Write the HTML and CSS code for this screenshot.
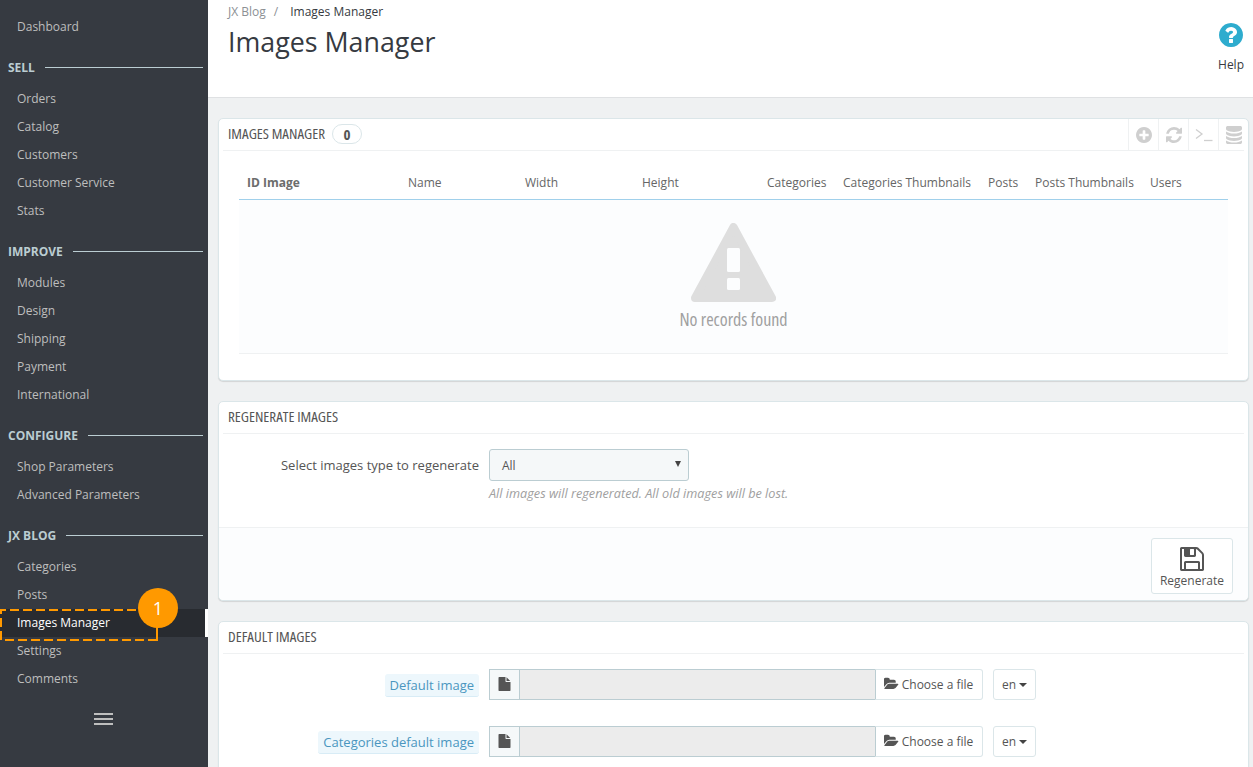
FILE: index.html
```html
<!DOCTYPE html>
<html lang="en">
<head>
<meta charset="utf-8">
<title>Images Manager</title>
<link rel="stylesheet" href="styles.css">
</head>
<body>
<div class="app">
  <nav class="sidebar">
    <a class="item first">Dashboard</a>
    <div class="section"><span>SELL</span></div>
    <a class="item">Orders</a>
    <a class="item">Catalog</a>
    <a class="item">Customers</a>
    <a class="item">Customer Service</a>
    <a class="item">Stats</a>
    <div class="section"><span>IMPROVE</span></div>
    <a class="item">Modules</a>
    <a class="item">Design</a>
    <a class="item">Shipping</a>
    <a class="item">Payment</a>
    <a class="item">International</a>
    <div class="section"><span>CONFIGURE</span></div>
    <a class="item">Shop Parameters</a>
    <a class="item">Advanced Parameters</a>
    <div class="section"><span>JX BLOG</span></div>
    <a class="item">Categories</a>
    <a class="item">Posts</a>
    <a class="item active">Images Manager
      <svg class="callout-box" viewBox="0 0 160 34"><path d="M157 31 H1 V1 H157"/></svg>
      <span class="callout-stem"></span>
      <span class="callout-num">1</span>
    </a>
    <a class="item">Settings</a>
    <a class="item">Comments</a>
    <div class="burger"><i></i><i></i><i></i></div>
  </nav>
  <main class="main">
    <header class="page-head">
      <div>
        <div class="crumbs"><span class="crumb-link">JX Blog</span><span class="crumb-sep">/</span><span>Images Manager</span></div>
        <h1>Images Manager</h1>
      </div>
      <div class="help">
        <svg class="help-icon" viewBox="128 128 1536 1536"><path d="M1024 1376v-192q0-14-9-23t-23-9h-192q-14 0-23 9t-9 23v192q0 14 9 23t23 9h192q14 0 23-9t9-23zm256-672q0-88-55.5-163t-138.5-116-170-41q-243 0-371 213-15 24 8 42l132 100q7 6 19 6 16 0 25-12 53-68 86-92 34-24 86-24 48 0 85.5 26t37.5 59q0 38-20 61t-68 45q-63 28-115.5 86.5t-52.5 125.5v36q0 14 9 23t23 9h192q14 0 23-9t9-23q0-19 21.5-49.5t54.5-49.5q32-18 49-28.5t46-35 44.5-48 28-60.5 12.5-81zm384 192q0 209-103 385.5t-279.5 279.5-385.5 103-385.5-103-279.5-279.5-103-385.5 103-385.5 279.5-279.5 385.5-103 385.5 103 279.5 279.5 103 385.5z"/></svg>
        <span>Help</span>
      </div>
    </header>
    <div class="content">
      <section class="panel">
        <div class="panel-head">
          <span class="panel-title">IMAGES MANAGER</span>
          <span class="count">0</span>
          <div class="tools">
            <div class="tool"><svg viewBox="128 128 1536 1536" class="t-icon"><path d="M1344 960v-128q0-26-19-45t-45-19h-256v-256q0-26-19-45t-45-19h-128q-26 0-45 19t-19 45v256h-256q-26 0-45 19t-19 45v128q0 26 19 45t45 19h256v256q0 26 19 45t45 19h128q26 0 45-19t19-45v-256h256q26 0 45-19t19-45zm320-64q0 209-103 385.5t-279.5 279.5-385.5 103-385.5-103-279.5-279.5-103-385.5 103-385.5 279.5-279.5 385.5-103 385.5 103 279.5 279.5 103 385.5z"/></svg></div>
            <div class="tool"><svg viewBox="128 128 1536 1536" class="t-icon"><path d="M1639 1056q0 5-1 7-64 268-268 434.5t-478 166.5q-146 0-282.5-55t-243.5-157l-129 129q-19 19-45 19t-45-19-19-45v-448q0-26 19-45t45-19h448q26 0 45 19t19 45-19 45l-137 137q71 66 161 102t187 36q134 0 250-65t186-179q11-17 53-117 8-23 30-23h192q13 0 22.5 9.5t9.5 22.5zm25-800v448q0 26-19 45t-45 19h-448q-26 0-45-19t-19-45 19-45l138-138q-148-137-349-137-134 0-250 65t-186 179q-11 17-53 117-8 23-30 23h-199q-13 0-22.5-9.5t-9.5-22.5v-7q65-268 270-434.5t480-166.5q146 0 284 55.5t245 156.5l130-129q19-19 45-19t45 19 19 45z"/></svg></div>
            <div class="tool"><svg viewBox="0 0 18 14" class="t-term"><path d="M1 1.5 L7 6 L1 10.5" /><path d="M9 12.5 H17.5" /></svg></div>
            <div class="tool"><svg viewBox="128 128 1536 1536" preserveAspectRatio="none" class="t-db"><path d="M896 768q237 0 443-43t325-127v170q0 69-103 128t-280 93.5-385 34.5-385-34.5-280-93.5-103-128v-170q119 84 325 127t443 43zm0 768q237 0 443-43t325-127v170q0 69-103 128t-280 93.5-385 34.5-385-34.5-280-93.5-103-128v-170q119 84 325 127t443 43zm0-384q237 0 443-43t325-127v170q0 69-103 128t-280 93.5-385 34.5-385-34.5-280-93.5-103-128v-170q119 84 325 127t443 43zm0-1152q208 0 385 34.5t280 93.5 103 128v128q0 69-103 128t-280 93.5-385 34.5-385-34.5-280-93.5-103-128v-128q0-69 103-128t280-93.5 385-34.5z"/></svg></div>
          </div>
        </div>
        <div class="table-wrap">
          <div class="thead">
            <span class="th-strong">ID Image</span><span>Name</span><span>Width</span><span>Height</span><span>Categories</span><span>Categories Thumbnails</span><span>Posts</span><span>Posts Thumbnails</span><span>Users</span>
          </div>
          <div class="empty">
            <svg class="warn" viewBox="0 0 85 79">
              <path class="warn-tri" d="M42.5 4 L81 75 H4 Z"/>
              <rect class="warn-hole" x="36" y="25" width="13" height="24" rx="1.5"/>
              <rect class="warn-hole" x="36" y="55" width="13" height="12" rx="1.5"/>
            </svg>
            <div class="empty-text">No records found</div>
          </div>
        </div>
      </section>
      <section class="panel">
        <div class="panel-head"><span class="panel-title">REGENERATE IMAGES</span></div>
        <div class="regen-body">
          <div class="row">
            <label class="label">Select images type to regenerate</label>
            <div class="field">
              <div class="select">All<span class="caret-sel"></span></div>
              <p class="hint">All images will regenerated. All old images will be lost.</p>
            </div>
          </div>
        </div>
        <div class="panel-foot">
          <button class="save" type="button">
            <svg viewBox="128 128 1536 1536" class="save-icon"><path d="M512 1536h768v-384h-768v384zm896 0h128v-896q0-14-10-38.5t-20-34.5l-281-281q-10-10-34-20t-39-10v416q0 40-28 68t-68 28h-576q-40 0-68-28t-28-68v-416h-128v1280h128v-416q0-40 28-68t68-28h832q40 0 68 28t28 68v416zm-384-928v-320q0-13-9.5-22.5t-22.5-9.5h-192q-13 0-22.5 9.5t-9.5 22.5v320q0 13 9.5 22.5t22.5 9.5h192q13 0 22.5-9.5t9.5-22.5zm640 32v928q0 40-28 68t-68 28h-1344q-40 0-68-28t-28-68v-1344q0-40 28-68t68-28h928q40 0 88 20t76 48l280 280q28 28 48 76t20 88z"/></svg>
            <span>Regenerate</span>
          </button>
        </div>
      </section>
      <section class="panel">
        <div class="panel-head"><span class="panel-title">DEFAULT IMAGES</span></div>
        <div class="uploads">
          <div class="row up-row">
            <label class="label"><span class="tip">Default image</span></label>
            <div class="file-group">
              <span class="addon"><svg viewBox="128 0 1536 1792" class="file-icon"><path d="M1596 476q14 14 28 36H1152V40q22 14 36 28zM1120 640h544v1056q0 40-28 68t-68 28H224q-40 0-68-28t-28-68V96q0-40 28-68t68-28h800v544q0 40 28 68t68 28z"/></svg></span>
              <span class="file-input"></span>
              <span class="file-btn"><svg viewBox="0 0 1920 1792" class="folder-icon"><path d="M1845 931q0 35-35 73l-336 396q-43 51-120.5 86.5t-143.5 35.5h-1088q-34 0-60.5-13t-26.5-43q0-35 35-73l336-396q43-51 120.5-86.5t143.5-35.5h1088q34 0 60.5 13t26.5 43zm-343-344v160h-832q-94 0-197 47.5t-164 119.5l-337 396-5 6q0-4-.5-12.5t-.5-12.5v-960q0-92 66-158t158-66h320q92 0 158 66t66 158v32h544q92 0 158 66t66 158z"/></svg>Choose a file</span>
            </div>
            <span class="lang">en<span class="caret"></span></span>
          </div>
          <div class="row up-row">
            <label class="label"><span class="tip">Categories default image</span></label>
            <div class="file-group">
              <span class="addon"><svg viewBox="128 0 1536 1792" class="file-icon"><path d="M1596 476q14 14 28 36H1152V40q22 14 36 28zM1120 640h544v1056q0 40-28 68t-68 28H224q-40 0-68-28t-28-68V96q0-40 28-68t68-28h800v544q0 40 28 68t68 28z"/></svg></span>
              <span class="file-input"></span>
              <span class="file-btn"><svg viewBox="0 0 1920 1792" class="folder-icon"><path d="M1845 931q0 35-35 73l-336 396q-43 51-120.5 86.5t-143.5 35.5h-1088q-34 0-60.5-13t-26.5-43q0-35 35-73l336-396q43-51 120.5-86.5t143.5-35.5h1088q34 0 60.5 13t26.5 43zm-343-344v160h-832q-94 0-197 47.5t-164 119.5l-337 396-5 6q0-4-.5-12.5t-.5-12.5v-960q0-92 66-158t158-66h320q92 0 158 66t66 158v32h544q92 0 158 66t66 158z"/></svg>Choose a file</span>
            </div>
            <span class="lang">en<span class="caret"></span></span>
          </div>
        </div>
      </section>
    </div>
  </main>
</div>
</body>
</html>
```
FILE: styles.css
```css
* { box-sizing: border-box; }
html, body { margin: 0; height: 100%; overflow: hidden; }
body { font-family: "Open Sans", "Liberation Sans", sans-serif; font-size: 13px; color: #363a41; background: #eff1f2; }
.app { display: flex; height: 767px; overflow: hidden; }

.sidebar { width: 208px; flex: none; background: #363a41; display: flex; flex-direction: column; padding-top: 13px; }
.item { display: block; position: relative; height: 28px; line-height: 27px; padding-left: 17px; color: #bebebe; font-size: 12px; }
.item.active { background: #282b30; color: #fff; border-right: 3px solid #fff; }
.section { display: flex; align-items: center; gap: 10px; height: 24px; margin: 14px 5px 6px 8px; color: #bbcdd2; font-weight: 700; font-size: 12px; }
.section::after { content: ""; flex: 1; height: 1px; background: #bbcdd2; margin-top: 1px; }
.callout-box { position: absolute; left: 0; top: 0; width: 160px; height: 34px; fill: none; stroke: #f90; stroke-width: 2; stroke-dasharray: 9 4; pointer-events: none; }
.callout-stem { position: absolute; left: 156px; top: 18px; width: 2px; height: 14px; background: #f90; }
.callout-num { position: absolute; left: 138px; top: -21px; width: 40px; height: 40px; border-radius: 50%; background: #f90; color: #fff; font-size: 18px; line-height: 40px; text-align: center; }
.burger { display: flex; flex-direction: column; gap: 3px; width: 19px; margin: 20px 0 0 94px; }
.burger i { display: block; height: 2px; background: #bebebe; }

.main { flex: 1; min-width: 0; display: flex; flex-direction: column; }
.page-head { height: 98px; flex: none; background: #fff; border-bottom: 1px solid #dfe1e3; display: flex; justify-content: space-between; padding: 0 9px 0 20px; }
.crumbs { font-size: 12px; line-height: 16px; padding-top: 4px; color: #363a41; }
.crumb-link { color: #8c9094; }
.crumb-sep { color: #8c9094; margin: 0 12px 0 8px; }
h1 { margin: 3px 0 0; font-size: 26.8px; font-weight: 400; line-height: 38px; color: #363a41; }
.help { display: flex; flex-direction: column; align-items: center; padding-top: 23px; font-size: 12px; color: #363a41; gap: 10px; line-height: 16px; }
.help-icon { width: 24px; height: 24px; fill: #2eacce; }

.content { flex: 1; padding: 20px 4px 0 10px; display: flex; flex-direction: column; gap: 20px; }
.panel { background: #fff; border: 1px solid #dbe6e9; border-radius: 5px; box-shadow: 0 1px 1px rgba(0,0,0,.12); flex: none; }
.panel-head { height: 32px; margin: 0 4px; padding: 0 0 4px 5px; border-bottom: 1px solid #eff1f2; display: flex; align-items: center; position: relative; }
.panel-title { font-size: 15px; font-stretch: 75%; color: #555; }
.count { margin: 3px 0 0 7px; width: 30px; height: 20px; border: 1px solid #dbe6e9; border-radius: 10px; text-align: center; line-height: 18px; font-size: 15px; font-weight: 700; font-stretch: 75%; color: #555; }
.tools { position: absolute; right: -4px; top: 0; height: 31px; display: flex; }
.tool { width: 30px; height: 31px; border-left: 1px solid #eff1f2; display: flex; align-items: center; justify-content: center; }
.t-icon { width: 16px; height: 16px; fill: #cfcfcf; }
.t-db { width: 16px; height: 18px; fill: #cfcfcf; }
.t-term { width: 18px; height: 14px; fill: none; stroke: #cfcfcf; stroke-width: 1.3; }

.table-wrap { padding: 16px 20px 26px 20px; }
.thead { display: grid; grid-template-columns: 161px 117px 117px 125px 76px 145px 47px 115px 86px; height: 33px; padding-bottom: 2px; align-items: center; border-bottom: 1px solid #a0d0eb; font-size: 12px; }
.thead span { padding-left: 8px; color: #666; }
.thead .th-strong { font-weight: 700; color: #6c6c6c; }
.empty { height: 154px; background: #fcfdfe; border-bottom: 1px solid #eff1f2; display: flex; flex-direction: column; align-items: center; padding-top: 23px; }
.warn { width: 85px; height: 79px; display: block; }
.warn-tri { fill: #dedede; stroke: #dedede; stroke-width: 8; stroke-linejoin: round; }
.warn-hole { fill: #fcfdfe; }
.empty-text { font-size: 18px; font-stretch: 75%; line-height: 24px; margin-top: 5px; color: #a0a0a0; }

.regen-body { padding: 15px 0 26px; }
.row { display: flex; }
.label { width: 270px; flex: none; text-align: right; padding-right: 10px; font-size: 13px; line-height: 32px; color: #555; }
.field { width: 500px; }
.select { position: relative; width: 200px; height: 32px; line-height: 32px; padding-left: 12px; background: #f5f8f9; border: 1px solid #bbcdd2; border-radius: 3px; font-size: 12px; color: #555; }
.caret-sel { position: absolute; right: 7px; top: 11px; border: 3.5px solid transparent; border-top: 6px solid #444; border-bottom: 0; }
.hint { margin: 4px 0 0; font-size: 12.7px; font-style: italic; line-height: 16px; color: #a0a0a0; }
.panel-foot { height: 73px; background: #fcfdfe; border-top: 1px solid #eff1f2; border-radius: 0 0 5px 5px; display: flex; justify-content: flex-end; padding: 10px 15px 0 0; }
.save { width: 82px; height: 56px; background: #fff; border: 1px solid #dbe6e9; border-radius: 3px; padding: 0; display: flex; flex-direction: column; align-items: center; font-family: inherit; font-size: 12px; color: #555; line-height: 16px; padding-top: 8px; }
.save-icon { width: 24px; height: 24px; fill: #555; margin-bottom: 2px; }

.uploads { padding: 15px 0 0; }
.up-row { height: 57px; align-items: flex-start; }
.up-row .label { line-height: 33px; }
.tip { background: #edf7fc; color: #4a96bf; padding: 2px 5px; border-bottom: 1px solid #d8ecf6; border-radius: 3px; }
.file-group { width: 494px; height: 31px; display: flex; }
.addon { width: 31px; flex: none; background: #f5f8f9; border: 1px solid #bbcdd2; display: flex; align-items: center; justify-content: center; padding-bottom: 2px; }
.file-icon { width: 13px; height: 14px; fill: #555; }
.file-input { flex: 1; background: #ececec; border: 1px solid #bbcdd2; border-left: 0; border-right: 0; }
.file-btn { width: 108px; flex: none; display: flex; align-items: center; justify-content: center; gap: 3px; background: #fff; border: 1px solid #dbe6e9; border-left-color: #bbcdd2; border-radius: 0 3px 3px 0; font-size: 12px; color: #555; padding: 0 1px 1px 0; }
.folder-icon { width: 15px; height: 14px; fill: #555; }
.lang { margin-left: 10px; width: 43px; height: 31px; border: 1px solid #dbe6e9; border-radius: 3px; background: #fff; display: flex; align-items: center; justify-content: center; gap: 3px; font-size: 12px; color: #555; }
.caret { border: 4px solid transparent; border-top: 4px solid #444; border-bottom: 0; margin-top: 1px; }
```
